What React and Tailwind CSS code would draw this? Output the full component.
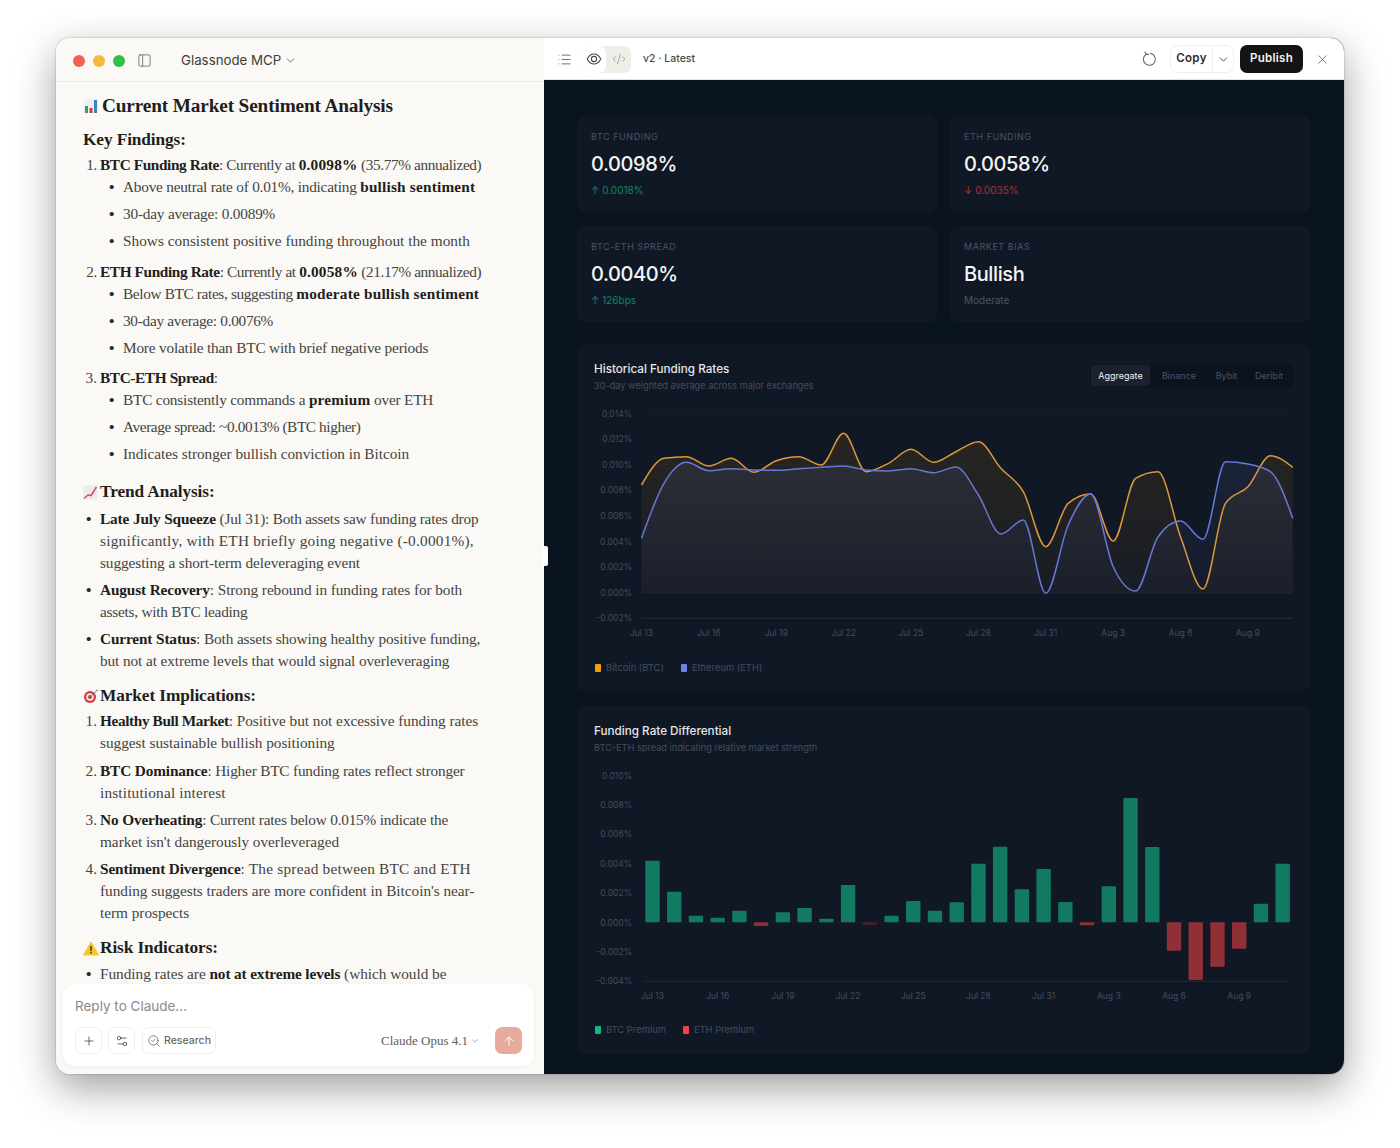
import React from "react";
import { ChevronDown, PanelLeft, List, CodeXml, X, Plus, Settings2, SearchCheck, ArrowUp } from "lucide-react";

const serif = "font-['Liberation_Serif',serif]";
const sans = "font-['Inter',sans-serif]";

function H({ emoji, children, className = "" }) {
  return (
    <h3 className={`flex items-center h-[26px] text-[17.3px] tracking-[-0.1px] font-bold text-[#1f1e1c] whitespace-nowrap ${className}`}>
      {emoji}
      {children}
    </h3>
  );
}
function Num({ n, children, className = "" }) {
  return (
    <div className={`grid grid-cols-[17px_1fr] leading-[22px] ${className}`}>
      <span className="text-right pr-[3px]">{n}.</span>
      <div className="whitespace-nowrap">{children}</div>
    </div>
  );
}
function Bul({ children, sub, className = "" }) {
  return (
    <div className={`grid ${sub ? "grid-cols-[40px_1fr]" : "grid-cols-[17px_1fr]"} leading-[22px] ${className}`}>
      <span className={`font-bold text-[#2b2a28] ${sub ? "pl-[26px]" : "pl-[3px]"}`}>•</span>
      <div className="whitespace-nowrap">{children}</div>
    </div>
  );
}
// one visual line of a wrapped paragraph; letter-spacing is tuned line by line
const Ln = ({ className = "", children }) => <span className={`block ${className}`}>{children}</span>;
const B = ({ children }) => <strong className="font-bold text-[#1f1e1c] tracking-[0.2px]">{children}</strong>;
const L = ({ children }) => <strong className="font-bold text-[#1f1e1c] tracking-[-0.13px]">{children}</strong>;
const LT = ({ children }) => <strong className="font-bold text-[#1f1e1c] tracking-[-0.38px]">{children}</strong>;

const EmojiBars = () => (
  <svg width="16" height="16" viewBox="0 0 16 16" className="mr-[3px]">
    <rect x="1" y="1" width="14" height="14" fill="#eef0f2" />
    <rect x="2" y="8" width="3" height="7" fill="#2f9e6e" />
    <rect x="6.5" y="10" width="3" height="5" fill="#d23b3b" />
    <rect x="11" y="2" width="3" height="13" fill="#3f7fc4" />
  </svg>
);
const EmojiTrend = () => (
  <svg width="15" height="15" viewBox="0 0 15 15" className="mr-[2px]">
    <rect x="0.5" y="0.5" width="14" height="14" fill="#ecebec" />
    <path d="M1 13.5 L5 10 L8 10.5 L13.5 2" fill="none" stroke="#d9506a" strokeWidth="1.6" />
  </svg>
);
const EmojiTarget = () => (
  <svg width="16" height="16" viewBox="0 0 16 16" className="mr-[1px]">
    <circle cx="7" cy="9" r="6" fill="#d9363e" />
    <circle cx="7" cy="9" r="3.8" fill="#f5e9e4" />
    <circle cx="7" cy="9" r="2" fill="#d9363e" />
    <path d="M7 9 L13.5 3" stroke="#6b7f8a" strokeWidth="1" />
    <path d="M12.5 2 L15 1.5 L14.5 4 Z" fill="#58a8c9" />
  </svg>
);
const EmojiWarn = () => (
  <svg width="16" height="15" viewBox="0 0 16 15" className="mr-[1px]">
    <path d="M8 1 L15.5 14 L0.5 14 Z" fill="#f7c62f" stroke="#f7c62f" strokeLinejoin="round" />
    <rect x="7.3" y="5" width="1.4" height="5.2" fill="#3a3000" />
    <rect x="7.3" y="11" width="1.4" height="1.4" fill="#3a3000" />
  </svg>
);

function Article() {
  return (
    <div className={`${serif} pl-[27px] pt-[10px] text-[15.3px] text-[#45443f] tracking-[-0.03px]`}>
      <h2 className="flex items-center h-[28px] text-[19.3px] tracking-[-0.15px] font-bold text-[#1f1e1c] whitespace-nowrap"><EmojiBars />Current Market Sentiment Analysis</h2>
      <H className="mt-[7px]">Key Findings:</H>
      <Num n={1} className="mt-px tracking-[-0.37px]"><LT>BTC Funding Rate</LT>: Currently at <B>0.0098%</B> (35.77% annualized)</Num>
      <Bul sub className="tracking-[-0.23px]">Above neutral rate of 0.01%, indicating <B>bullish sentiment</B></Bul>
      <Bul sub className="mt-[5px] tracking-[-0.2px]">30-day average: 0.0089%</Bul>
      <Bul sub className="mt-[5px] tracking-[0.02px]">Shows consistent positive funding throughout the month</Bul>
      <Num n={2} className="mt-[9px] tracking-[-0.4px]"><LT>ETH Funding Rate</LT>: Currently at <B>0.0058%</B> (21.17% annualized)</Num>
      <Bul sub className="tracking-[-0.35px]">Below BTC rates, suggesting <B>moderate bullish sentiment</B></Bul>
      <Bul sub className="mt-[5px] tracking-[-0.29px]">30-day average: 0.0076%</Bul>
      <Bul sub className="mt-[5px] tracking-[-0.19px]">More volatile than BTC with brief negative periods</Bul>
      <Num n={3} className="mt-[8px]"><LT>BTC-ETH Spread</LT>:</Num>
      <Bul sub className="tracking-[-0.19px]">BTC consistently commands a <B>premium</B> over ETH</Bul>
      <Bul sub className="mt-[5px] tracking-[-0.4px]">Average spread: ~0.0013% (BTC higher)</Bul>
      <Bul sub className="mt-[5px]">Indicates stronger bullish conviction in Bitcoin</Bul>
      <H emoji={<EmojiTrend />} className="mt-[14px]">Trend Analysis:</H>
      <Bul className="mt-[3px]">
        <Ln className="tracking-[-0.21px]"><L>Late July Squeeze</L> (Jul 31): Both assets saw funding rates drop</Ln>
        <Ln className="tracking-[0.23px]">significantly, with ETH briefly going negative (-0.0001%),</Ln>
        <Ln className="tracking-[-0.08px]">suggesting a short-term deleveraging event</Ln>
      </Bul>
      <Bul className="mt-[5px]">
        <Ln className="tracking-[-0.07px]"><L>August Recovery</L>: Strong rebound in funding rates for both</Ln>
        <Ln className="tracking-[-0.23px]">assets, with BTC leading</Ln>
      </Bul>
      <Bul className="mt-[5px]">
        <Ln className="tracking-[-0.11px]"><L>Current Status</L>: Both assets showing healthy positive funding,</Ln>
        <Ln className="tracking-[-0.1px]">but not at extreme levels that would signal overleveraging</Ln>
      </Bul>
      <H emoji={<EmojiTarget />} className="mt-[11px]">Market Implications:</H>
      <Num n={1} className="mt-px"><LT>Healthy Bull Market</LT>: Positive but not excessive funding rates<br />suggest sustainable bullish positioning</Num>
      <Num n={2} className="mt-[6px]">
        <Ln className="tracking-[-0.19px]"><L>BTC Dominance</L>: Higher BTC funding rates reflect stronger</Ln>
        <Ln className="tracking-[0.17px]">institutional interest</Ln>
      </Num>
      <Num n={3} className="mt-[5px]">
        <Ln className="tracking-[-0.21px]"><L>No Overheating</L>: Current rates below 0.015% indicate the</Ln>
        <Ln>market isn't dangerously overleveraged</Ln>
      </Num>
      <Num n={4} className="mt-[5px]">
        <Ln className="tracking-[0.22px]"><L>Sentiment Divergence</L>: The spread between BTC and ETH</Ln>
        <Ln>funding suggests traders are more confident in Bitcoin's near-</Ln>
        <Ln>term prospects</Ln>
      </Num>
      <H emoji={<EmojiWarn />} className="mt-[11px]">Risk Indicators:</H>
      <Bul className="mt-[2px]">Funding rates are <L>not at extreme levels</L> (which would be</Bul>
    </div>
  );
}

function Composer() {
  return (
    <div className="pl-[7px] pr-[10px] pb-[8px]">
      <div className="h-[82px] bg-white rounded-[12px] shadow-[0_1px_4px_rgba(0,0,0,0.05)] px-[12px] pt-[12px] flex flex-col">
        <div className={`${sans} text-[13.5px] leading-[20px] text-[#8b8a85]`}>Reply to Claude...</div>
        <div className="flex items-center mt-[11px]">
          <button className="w-[27px] h-[27px] rounded-[7px] border border-[#f1efe9] flex items-center justify-center text-[#55544f]"><Plus size={14} strokeWidth={1.5} /></button>
          <button className="w-[27px] h-[27px] ml-[6px] rounded-[7px] border border-[#f1efe9] flex items-center justify-center text-[#55544f]"><Settings2 size={14} strokeWidth={1.5} /></button>
          <button className={`${sans} h-[27px] w-[74px] ml-[7px] rounded-[7px] border border-[#f1efe9] flex items-center justify-center gap-[3px] text-[10.5px] font-medium text-[#6a6964]`}><SearchCheck size={14} strokeWidth={1.4} />Research</button>
          <div className={`${serif} ml-auto text-[13px] text-[#5f5e59] whitespace-nowrap flex items-center`}>Claude Opus 4.1<ChevronDown size={10} className="ml-[2px] text-[#9a9993]" /></div>
          <button className="w-[27px] h-[27px] ml-[15px] rounded-[7px] bg-[#e6ac9b] flex items-center justify-center text-white"><ArrowUp size={14} strokeWidth={1.6} /></button>
        </div>
      </div>
    </div>
  );
}

function Left() {
  return (
    <div className="w-[488px] bg-[#faf9f5] flex flex-col shrink-0">
      <div className="h-[44px] border-b border-[#eceae3] flex items-center pl-[17px] pt-[2px] shrink-0">
        <span className="w-[12px] h-[12px] rounded-full bg-[#f2605a]" />
        <span className="w-[12px] h-[12px] rounded-full bg-[#f6b93b] ml-[8px]" />
        <span className="w-[12px] h-[12px] rounded-full bg-[#2fc048] ml-[8px]" />
        <PanelLeft size={15} strokeWidth={1.2} className="ml-[12px] text-[#5a5955]" />
        <span className={`${sans} ml-[29px] text-[13.3px] text-[#3e3d39]`}>Glassnode MCP</span>
        <ChevronDown size={13} strokeWidth={1.5} className="ml-[3px] text-[#5a5955]" />
      </div>
      <div className="flex-1 overflow-hidden"><Article /></div>
      <Composer />
    </div>
  );
}

const EyeRing = () => (
  <svg width="16" height="16" viewBox="0 0 16 16" fill="none" stroke="currentColor" strokeWidth="1.1">
    <path d="M1.2 8 C3 4.4 5.4 3 8 3 C10.6 3 13 4.4 14.8 8 C13 11.6 10.6 13 8 13 C5.4 13 3 11.6 1.2 8 Z" />
    <circle cx="8" cy="8" r="2.6" />
  </svg>
);
const Reload = () => (
  <svg width="16" height="16" viewBox="0 0 16 16" fill="none" stroke="currentColor" strokeWidth="1.1" strokeLinecap="round" strokeLinejoin="round">
    <path d="M5.2 3.2 A6 6 0 1 0 9.6 2.4" />
    <path d="M4 1 L5.2 3.4 L7.6 3.4" />
  </svg>
);

function TopBar() {
  return (
    <div className={`${sans} h-[42px] pt-px bg-white border-b border-[#dfe3e6] flex items-center shrink-0 pl-[13px] pr-[14px]`}>
      <List size={15} strokeWidth={1.3} className="text-[#55544f]" />
      <div className="ml-[10px] h-[27px] w-[49px] rounded-[7px] bg-[#eeede7] flex items-center">
        <span className="h-[27px] w-[24px] bg-white rounded-[7px] flex items-center justify-center text-[#4a4945]"><EyeRing /></span>
        <span className="flex-1 flex items-center justify-center text-[#8a8984]"><CodeXml size={14} strokeWidth={1.2} /></span>
      </div>
      <span className="ml-[12px] text-[10.5px] font-medium text-[#4a4945]">v2 · Latest</span>
      <span className="ml-auto text-[#6a6964]"><Reload /></span>
      <div className="ml-[13px] h-[28px] w-[64px] rounded-[7px] border border-[#f1f0ec] flex items-center text-[11.5px] tracking-[0.3px] font-semibold text-[#2b2a28]">
        <span className="flex-1 text-center">Copy</span>
        <span className="w-[21px] h-full border-l border-[#f1f0ec] flex items-center justify-center"><ChevronDown size={13} strokeWidth={1.5} /></span>
      </div>
      <button className="ml-[6px] h-[28px] w-[63px] rounded-[7px] bg-[#141413] text-[#f5f5f3] text-[11.5px] tracking-[0.3px] font-semibold">Publish</button>
      <X size={15} strokeWidth={1.2} className="ml-[12px] text-[#55544f]" />
    </div>
  );
}

function Stat({ label, value, delta, tone }) {
  const color = tone === "up" ? "text-[#0f8767]" : tone === "down" ? "text-[#a8333a]" : "text-[#4b5463]";
  return (
    <div className="h-[96px] rounded-[8px] bg-[#111825] border border-[#121a28] pl-[13px] pt-[13px]">
      <div className="text-[9px] leading-[14px] tracking-[0.55px] uppercase text-[#4b5463] h-[14px]">{label}</div>
      <div className="text-[20px] leading-[28px] font-medium text-[#f3f4f6] mt-[6px] tracking-[-0.4px]">{value}</div>
      <div className={`text-[10px] leading-[14px] mt-[5px] ${color}`}>{delta}</div>
    </div>
  );
}

// monotone-X curve through page-coordinate points
function monotone(pts) {
  const n = pts.length;
  const m = new Array(n).fill(0);
  const s = [];
  for (let i = 0; i < n - 1; i++) s.push((pts[i + 1][1] - pts[i][1]) / (pts[i + 1][0] - pts[i][0]));
  for (let i = 1; i < n - 1; i++) {
    if (s[i - 1] * s[i] <= 0) m[i] = 0;
    else m[i] = (Math.sign(s[i - 1]) + Math.sign(s[i])) * Math.min(Math.abs(s[i - 1]), Math.abs(s[i]), 0.25 * Math.abs(s[i - 1] + s[i]));
  }
  m[0] = (3 * s[0] - m[1]) / 2;
  m[n - 1] = (3 * s[n - 2] - m[n - 2]) / 2;
  let d = `M${pts[0][0]},${pts[0][1]}`;
  for (let i = 0; i < n - 1; i++) {
    const h = (pts[i + 1][0] - pts[i][0]) / 3;
    d += `C${pts[i][0] + h},${pts[i][1] + m[i] * h} ${pts[i + 1][0] - h},${pts[i + 1][1] - m[i + 1] * h} ${pts[i + 1][0]},${pts[i + 1][1]}`;
  }
  return d;
}

const btcZ = [435,355,350,378,355,397,362,350,375,280,395,370,328,367,335,305,385,455,620,490,462,603,415,395,590,747,490,440,347,382];
const ethZ = [595,430,367,392,386,390,391,386,382,378,390,393,386,398,381,465,582,540,760,555,462,680,753,590,543,598,365,372,395,535];
const X0 = 641.5, DX = 22.46;
const toPts = (z) => z.map((py, i) => [+(X0 + DX * i).toFixed(1), +(340 + py / 3).toFixed(1)]);
const dates = ["Jul 13", "Jul 16", "Jul 19", "Jul 22", "Jul 25", "Jul 28", "Jul 31", "Aug 3", "Aug 6", "Aug 9"];

function LineChart() {
  const yl = ["0.014%", "0.012%", "0.010%", "0.008%", "0.006%", "0.004%", "0.002%", "0.000%", "-0.002%"];
  const b = monotone(toPts(btcZ));
  const e = monotone(toPts(ethZ));
  const base = 593.5;
  const xEnd = X0 + DX * 29;
  const area = (d) => `${d}L${xEnd},${base}L${X0},${base}Z`;
  return (
    <svg width="733" height="261" viewBox="577 394 733 261" className="block">
      <defs>
        <linearGradient id="gb" x1="0" y1="0" x2="0" y2="1">
          <stop offset="0" stopColor="#f59e0b" stopOpacity="0.1" />
          <stop offset="1" stopColor="#f59e0b" stopOpacity="0.03" />
        </linearGradient>
        <linearGradient id="ge" x1="0" y1="0" x2="0" y2="1">
          <stop offset="0" stopColor="#6b82e8" stopOpacity="0.1" />
          <stop offset="1" stopColor="#6b82e8" stopOpacity="0.03" />
        </linearGradient>
      </defs>
      {yl.map((t, i) => {
        const y = 413.5 + i * 25.6;
        return (
          <g key={t}>
            <line x1={X0} x2={xEnd} y1={y} y2={y} stroke="#ffffff" strokeOpacity={i === 8 ? 0.1 : 0.025} />
            <text x="632" y={y + 3} textAnchor="end" fontSize="8.5" fill="#434c5b">{t}</text>
          </g>
        );
      })}
      {dates.map((t, i) => (
        <text key={t} x={X0 + DX * 3 * i} y="636" textAnchor="middle" fontSize="8.5" fill="#434c5b">{t}</text>
      ))}
      <path d={area(b)} fill="url(#gb)" />
      <path d={area(e)} fill="url(#ge)" />
      <path d={b} fill="none" stroke="#d9983a" strokeWidth="1.5" />
      <path d={e} fill="none" stroke="#6579d4" strokeWidth="1.5" />
    </svg>
  );
}

const bars = [482,575,647,653,632,678,637,624,656,555,675,647,603,632,607,491,440,568,507,606,676,559,294,441,752,840,800,746,611,491];
function BarChart() {
  const yl = ["0.010%", "0.008%", "0.006%", "0.004%", "0.002%", "0.000%", "-0.002%", "-0.004%"];
  const toY = (py) => 700 + py / 3;
  const base = toY(667);
  return (
    <svg width="733" height="262" viewBox="577 756 733 262" className="block">
      {yl.map((t, i) => {
        const y = 775.5 + i * 29.4;
        return (
          <g key={t}>
            <line x1="645" x2="1290" y1={y} y2={y} stroke="#ffffff" strokeOpacity={i === 7 ? 0.08 : 0.02} />
            <text x="632" y={y + 3} textAnchor="end" fontSize="8.5" fill="#434c5b">{t}</text>
          </g>
        );
      })}
      {dates.map((t, i) => (
        <text key={t} x={652.5 + 21.73 * 3 * i} y="999" textAnchor="middle" fontSize="8.5" fill="#434c5b">{t}</text>
      ))}
      {bars.map((py, i) => {
        const x = 652.5 + 21.73 * i - 7.2;
        const y = toY(py);
        const up = py < 667;
        const h = Math.abs(y - base);
        const dim = i === 10;
        return (
          <rect
            key={i}
            x={x}
            width="14.4"
            y={up ? y : base}
            height={h}
            rx="1"
            fill={up ? "#127a60" : "#8f3036"}
            opacity={dim ? 0.4 : 1}
          />
        );
      })}
    </svg>
  );
}

function Legend({ items }) {
  return (
    <div className="h-[16px] flex items-center gap-[17px] mt-[4px] text-[9.4px] text-[#434c5b]">
      {items.map(([c, t]) => (
        <span key={t} className="flex items-center gap-[5px]">
          <span className={`w-[6px] h-[8px] rounded-[1px] ${c}`} />
          {t}
        </span>
      ))}
    </div>
  );
}

function Right() {
  return (
    <div className={`${sans} flex-1 min-w-0 flex flex-col bg-[#0a1420]`}>
      <TopBar />
      <div className="flex-1 overflow-hidden pl-[33px] pr-[34px] pt-[36px]">
        <div className="grid grid-cols-[360px_360px] gap-x-[13px] gap-y-[14px]">
          <Stat label="BTC Funding" value="0.0098%" delta="↑ 0.0018%" tone="up" />
          <Stat label="ETH Funding" value="0.0058%" delta="↓ 0.0035%" tone="down" />
          <Stat label="BTC-ETH Spread" value="0.0040%" delta="↑ 126bps" tone="up" />
          <Stat label="Market Bias" value="Bullish" delta="Moderate" />
        </div>
        <section className="mt-[22px] rounded-[8px] bg-[#111825] pt-[16px] pb-[15px]">
          <div className="h-[34px] flex justify-between pl-[17px] pr-[16px]">
            <div>
              <div className="text-[11.7px] leading-[18px] font-medium text-[#e5e7eb]">Historical Funding Rates</div>
              <div className="text-[9.2px] leading-[16px] text-[#434c5b]">30-day weighted average across major exchanges</div>
            </div>
            <div className="h-[23px] mt-[4px] rounded-[5px] bg-[#0d131e] flex items-center p-px text-[9px] text-[#4b5463]">
              <span className="h-full w-[59px] rounded-[4px] bg-[#1a2230] text-[#eef0f3] flex items-center justify-center">Aggregate</span>
              <span className="w-[58px] text-center">Binance</span>
              <span className="w-[37px] text-center">Bybit</span>
              <span className="w-[48px] text-center">Deribit</span>
            </div>
          </div>
          <LineChart />
          <div className="pl-[18px] pt-px">
            <Legend items={[["bg-[#f59e0b]", "Bitcoin (BTC)"], ["bg-[#6b82e8]", "Ethereum (ETH)"]]} />
          </div>
        </section>
        <section className="mt-[15px] rounded-[8px] bg-[#111825] pt-[16px] pb-[16px]">
          <div className="pl-[17px]">
            <div className="text-[11.7px] leading-[18px] font-medium text-[#e5e7eb]">Funding Rate Differential</div>
            <div className="text-[9.2px] leading-[16px] text-[#434c5b]">BTC-ETH spread indicating relative market strength</div>
          </div>
          <BarChart />
          <div className="pl-[18px]">
            <Legend items={[["bg-[#10b981]", "BTC Premium"], ["bg-[#ef4444]", "ETH Premium"]]} />
          </div>
        </section>
      </div>
    </div>
  );
}

export default function App() {
  return (
    <div className="w-[1400px] h-[1148px] bg-white overflow-hidden pt-[38px] pl-[56px]">
      <div className="relative w-[1288px] h-[1036px] rounded-[14px] shadow-[0_14px_40px_rgba(0,0,0,0.38),0_0_2px_rgba(0,0,0,0.35)]">
        <div className="w-full h-full flex rounded-[14px] overflow-hidden">
          <Left />
          <Right />
        </div>
        <span className="absolute left-[486px] top-[508px] w-[6px] h-[20px] rounded-[2px] bg-white" />
      </div>
    </div>
  );
}
